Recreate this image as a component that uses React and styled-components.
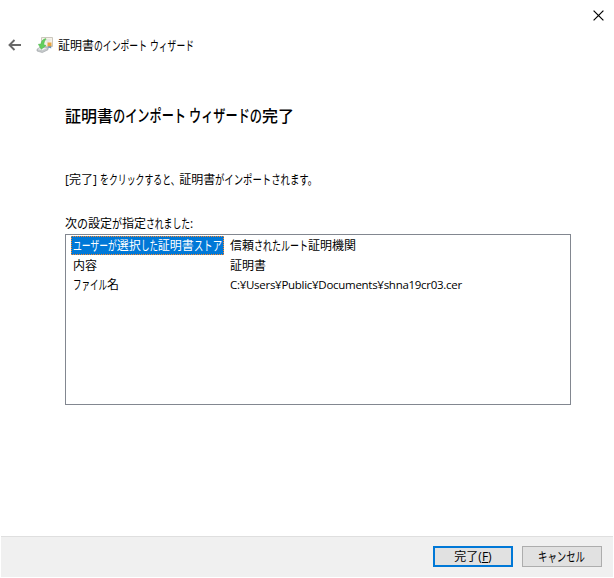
import styled, { createGlobalStyle } from "styled-components";

const GlobalStyle = createGlobalStyle`
  * {
    box-sizing: border-box;
  }

  body {
    margin: 0;
    background-color: #ffffff;
    color: #000000;
    font-family: "Open Sans", "Noto Sans CJK JP", sans-serif;
    font-size: 12px;
    line-height: 18px;
  }
`;

// UI kana are narrower than kanji: a run of full-width kana is condensed to w px
const Kana = ({ w, size = 13, children }) => (
  <KanaRun $size={size} $k={w / (children.length * size)} $cut={w - children.length * size}>
    {children}
  </KanaRun>
);

const BackIcon = () => (
  <svg width="14" height="12" viewBox="0 0 14 12">
    <path d="M1.5 6H13M6.5 1L1.5 6l5 5" fill="none" stroke="#686868" strokeWidth="1.9" />
  </svg>
);

const CertificateIcon = () => (
  <svg width="18" height="18" viewBox="0 0 18 18">
    <path d="M5.5 1.5h11v9h-11z" fill="#f6f2e8" stroke="#cbc7bd" />
    <path d="M9.5 4h5M10.5 6h3" stroke="#dbdcdb" />
    <path d="M12.2 9v3.6l1.4-.8 1.6.8V9z" fill="#6593bd" />
    <path d="M11.5 6.5h4v3.8h-4z" fill="#e9a540" />
    <path d="M1 13.2l3.5-2.2 7.5.6v2.2L6.3 16.6 1 15z" fill="#c3c7c9" stroke="#9b9fa2" strokeWidth=".6" />
    <path d="M1.8 13.2l3-1.6 6.2.4-4.6 2.3z" fill="#eceeee" />
    <path d="M9.8 2.6C7 3.2 5.3 5 4.9 8L2.4 8.3l2.8 5 4.9-3.8-2.3-.7c.1-2.2.8-4 2-5.3z" fill="#62cf5b" stroke="#4bb34b" strokeWidth=".5" />
  </svg>
);

const CloseIcon = () => (
  <svg width="11" height="11" viewBox="0 0 11 11">
    <path d="M.6.6l9.8 9.8M10.4.6L.6 10.4" stroke="#000000" strokeWidth="1.2" />
  </svg>
);

export default function App() {
  return (
    <>
      <GlobalStyle />
      <Dialog>
        <TitleBar>
          <CloseButton aria-label="閉じる">
            <CloseIcon />
          </CloseButton>
        </TitleBar>
        <Header>
          <BackButton aria-label="戻る">
            <BackIcon />
          </BackButton>
          <CertificateIcon />
          <Caption>
            証明書<Kana w={53}>のインポート</Kana>
            <Space $w={3} />
            <Kana w={44}>ウィザード</Kana>
          </Caption>
        </Header>
        <Content>
          <Heading>
            証明書<Kana w={73} size={17}>のインポート</Kana>
            <Space $w={3} />
            <Kana w={73} size={17}>ウィザードの</Kana>完了
          </Heading>
          <Message>
            [完了]
            <Space $w={3} />
            <Kana w={80}>をクリックすると、</Kana>証明書<Kana w={103}>がインポートされます。</Kana>
          </Message>
          <Label>
            次<Kana w={11}>の</Kana>設定<Kana w={10}>が</Kana>指定<Kana w={44}>されました</Kana>:
          </Label>
          <ListView>
            <Row>
              <Name $selected>
                <Kana w={44}>ユーザーが</Kana>選択<Kana w={17}>した</Kana>証明書<Kana w={28}>ストア</Kana>
              </Name>
              <Value>
                信頼<Kana w={54}>されたルート</Kana>証明機関
              </Value>
            </Row>
            <Row>
              <Name>内容</Name>
              <Value>証明書</Value>
            </Row>
            <Row>
              <Name>
                <Kana w={34}>ファイル</Kana>名
              </Name>
              <Value>
                <Path>C:¥Users¥Public¥Documents¥shna19cr03.cer</Path>
              </Value>
            </Row>
          </ListView>
        </Content>
        <Footer>
          <Button $primary>
            完了(<u>F</u>)
          </Button>
          <Button>
            <Kana w={47}>キャンセル</Kana>
          </Button>
        </Footer>
      </Dialog>
    </>
  );
}

const Dialog = styled.div`
  width: 614px;
  height: 578px;
  padding: 0 1px 1px;
  display: flex;
  flex-direction: column;
  white-space: nowrap;
  overflow: hidden;
`;

const KanaRun = styled.span`
  display: inline-block;
  font-size: ${(p) => p.$size}px;
  line-height: 1;
  transform: scaleX(${(p) => p.$k});
  transform-origin: left;
  margin-right: ${(p) => p.$cut}px;
`;

const Space = styled.span`
  display: inline-block;
  width: ${(p) => p.$w}px;
`;

const PlainButton = styled.button`
  display: flex;
  padding: 0;
  border: none;
  background-color: transparent;
`;

const TitleBar = styled.div`
  height: 30px;
  padding: 10px 9.5px 0 0;
  display: flex;
  justify-content: flex-end;
  align-items: flex-start;
`;

const CloseButton = styled(PlainButton)``;

const Header = styled.div`
  height: 30px;
  padding-left: 7px;
  display: flex;
  align-items: center;
`;

const BackButton = styled(PlainButton)`
  margin-right: 14px;
`;

const Caption = styled.div`
  margin: 2px 0 0 4px;
`;

const Content = styled.div`
  flex: 1;
  padding: 0 42px 0 64px;
`;

const Heading = styled.h1`
  margin: 44px 0 0;
  font-size: 16px;
  line-height: 24px;
  font-weight: 500;
`;

const Message = styled.p`
  margin: 43px 0 0;
`;

const Label = styled.div`
  margin-top: 26px;
`;

const ListView = styled.div`
  height: 171px;
  margin-top: 1px;
  padding: 1px 5px;
  border: 1px solid #828790;
`;

const Row = styled.div`
  height: 19px;
  display: flex;
  align-items: center;

  &:first-child {
    margin-bottom: 1px;
  }
`;

const Name = styled.div`
  width: 153px;
  height: 19px;
  padding-left: 1px;
  border: 1px dotted ${(p) => (p.$selected ? "#ff8728" : "transparent")};
  background-color: ${(p) => (p.$selected ? "#0078d7" : "transparent")};
  color: ${(p) => (p.$selected ? "#ffffff" : "#000000")};
  line-height: 17px;
`;

const Value = styled.div`
  margin-left: 6px;
`;

const Path = styled.span`
  font-size: 11.5px;
  letter-spacing: -0.28px;
`;

const Footer = styled.div`
  height: 41px;
  padding: 9px 11px 0 0;
  display: flex;
  justify-content: flex-end;
  gap: 9px;
  border-top: 1px solid #dfdfdf;
  background-color: #f0f0f0;
`;

const Button = styled.button`
  width: 80px;
  height: 21px;
  padding: 0;
  display: flex;
  justify-content: center;
  align-items: center;
  border: ${(p) => (p.$primary ? "2px solid #0078d7" : "1px solid #adadad")};
  background-color: #e1e1e1;
  color: #000000;
  font: inherit;
`;
